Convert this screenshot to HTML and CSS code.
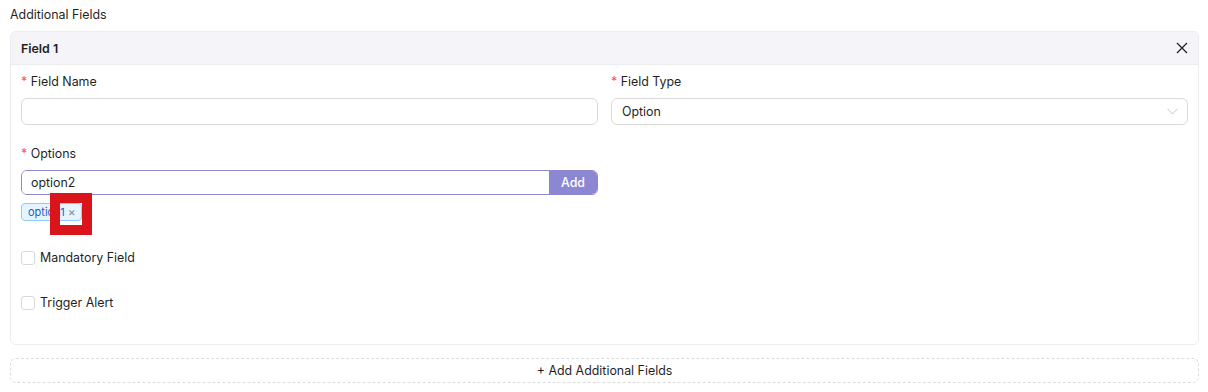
FILE: index.html
```html
<!DOCTYPE html>
<html lang="en">
<head>
    <meta charset="UTF-8">
    <title>Additional Fields</title>
    <link rel="stylesheet" href="styles.css">
</head>
<body>
    <div class="page">
        <div class="section-title">Additional Fields</div>

        <!-- Карточка поля -->
        <div class="field-card">
            <div class="card-head">
                <span>Field 1</span>
                <svg class="close-icon" width="12" height="12" viewBox="0 0 12 12">
                    <path d="M1 1L11 11M11 1L1 11" stroke="#222" stroke-width="1.3" fill="none"/>
                </svg>
            </div>
            <div class="card-body">
                <div class="row">
                    <div class="form-item">
                        <label class="label"><span class="req">*</span> Field Name</label>
                        <input class="text-input" type="text">
                    </div>
                    <div class="form-item">
                        <label class="label"><span class="req">*</span> Field Type</label>
                        <div class="select">
                            <span>Option</span>
                            <svg width="11" height="7" viewBox="0 0 11 7">
                                <path d="M0.5 0.8L5.5 6L10.5 0.8" stroke="#c4c4c4" stroke-width="1" fill="none"/>
                            </svg>
                        </div>
                    </div>
                </div>

                <div class="row">
                    <div class="form-item options-item">
                        <label class="label"><span class="req">*</span> Options</label>
                        <div class="input-group">
                            <input class="group-input" type="text" value="option2">
                            <button class="add-btn">Add</button>
                        </div>
                        <div class="tags">
                            <span class="tag">option1 <span class="tag-x">×</span></span>
                            <span class="highlight"></span>
                        </div>
                    </div>
                    <div class="form-item"></div>
                </div>

                <label class="check"><span class="box"></span> Mandatory Field</label>
                <label class="check"><span class="box"></span> Trigger Alert</label>
            </div>
        </div>

        <button class="dashed-btn">+ Add Additional Fields</button>
    </div>
</body>
</html>
```

FILE: styles.css
```css
/* Общие стили */
body {
    font-family: Inter, 'Noto Sans', sans-serif;
    font-size: 12.4px;
    color: #1f1f1f;
    background: #fff;
    margin: 0;
}

.page {
    padding: 7px 9px 0 10px;
}

.section-title {
    line-height: 16px;
    margin-bottom: 8px;
}

.field-card {
    border: 1px solid #ececec;
    border-radius: 6px;
    overflow: hidden;
}

.card-head {
    display: flex;
    justify-content: space-between;
    align-items: center;
    height: 32px;
    padding: 0 10px;
    background: #f4f4f9;
    border-bottom: 1px solid #ececec;
    font-weight: 600;
}

.card-body {
    padding: 9px 10px 33px;
}

.row {
    display: flex;
    gap: 13px;
}

.form-item {
    flex: 1;
    margin-bottom: 21px;
}

.options-item {
    margin-bottom: 29px;
}

.label {
    display: block;
    line-height: 16px;
    margin-bottom: 8px;
}

.req {
    color: #ff4d4f;
}

.text-input {
    box-sizing: border-box;
    width: 100%;
    height: 27px;
    border: 1px solid #d9d9d9;
    border-radius: 6px;
    outline: none;
}

.select {
    box-sizing: border-box;
    height: 27px;
    display: flex;
    align-items: center;
    justify-content: space-between;
    padding: 0 9px 0 10px;
    border: 1px solid #d9d9d9;
    border-radius: 6px;
}

.input-group {
    display: flex;
    height: 23px;
    border: 1px solid #8d88c9;
    border-radius: 6px;
    overflow: hidden;
}

.group-input {
    flex: 1;
    border: none;
    outline: none;
    padding: 0 9px;
    font-family: inherit;
    font-size: 12.4px;
    color: #1f1f1f;
}

.add-btn {
    width: 48px;
    border: none;
    background: #8c87d3;
    color: #fff;
    font-family: inherit;
    font-size: 12.4px;
    font-weight: 500;
}

.tags {
    position: relative;
    margin-top: 8px;
    height: 18px;
}

.tag {
    display: inline-block;
    box-sizing: border-box;
    height: 18px;
    line-height: 16px;
    padding: 0 5px 0 6px;
    font-size: 11px;
    color: #1f5fbf;
    background: #e6f4ff;
    border: 1px solid #91caff;
    border-radius: 4px;
}

.tag-x {
    color: #8c8c8c;
    font-size: 12px;
}

/* красная рамка поверх тега */
.highlight {
    position: absolute;
    left: 29px;
    top: -10px;
    width: 22px;
    height: 22px;
    border: 10px solid #d9151b;
}

.check {
    display: flex;
    align-items: center;
    gap: 5px;
    line-height: 16px;
    margin-bottom: 29px;
}

.check:last-child {
    margin-bottom: 0;
}

.box {
    width: 12px;
    height: 12px;
    border: 1px solid #d9d9d9;
    border-radius: 3px;
}

.dashed-btn {
    display: block;
    width: 100%;
    height: 25px;
    margin-top: 13px;
    border: 1px dashed #dcdcdc;
    border-radius: 6px;
    background: #fff;
    font-family: inherit;
    font-size: 12.4px;
    color: #1f1f1f;
}
```
